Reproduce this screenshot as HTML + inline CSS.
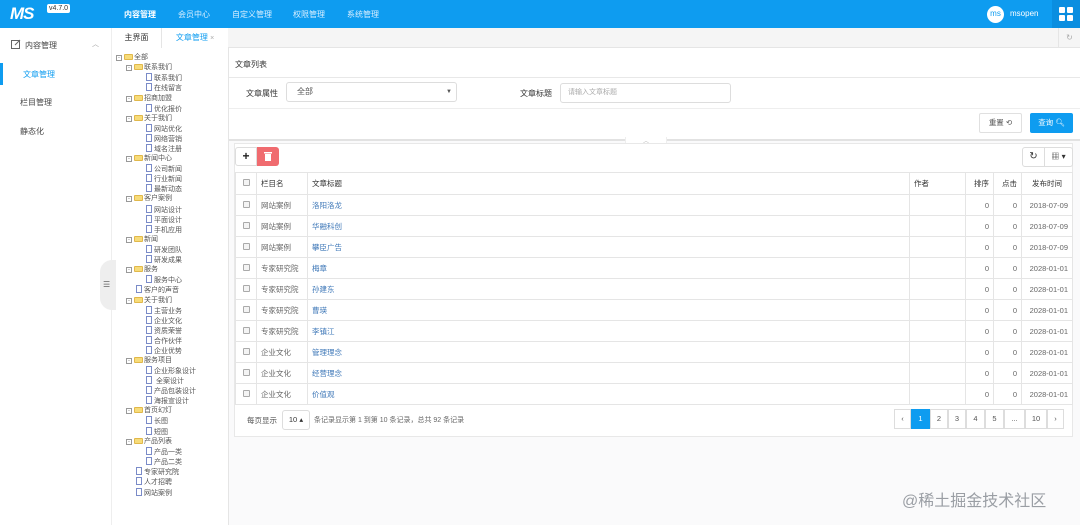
<!DOCTYPE html>
<html><head><meta charset="utf-8"><style>
*{box-sizing:border-box;margin:0;padding:0}
body{width:1080px;height:525px;overflow:hidden;background:#fff;font-family:"Liberation Sans","Noto Sans CJK SC",sans-serif;font-size:8px;color:#333;position:relative}
.a{position:absolute}
.hdr{left:0;top:0;width:1080px;height:28px;background:#0e9cf0}
.nav{top:9px;color:#d9efff;font-size:8px}
.tree div{position:absolute;height:10px;line-height:10px;font-size:7px;color:#555;white-space:nowrap}
.fd{display:inline-block;width:9px;height:6px;background:#f7dc7a;border:1px solid #e1b84a;border-radius:1px;vertical-align:-1px;margin-right:1px}
.fl{display:inline-block;width:6px;height:8px;border:1px solid #7a8bc8;background:#fff;vertical-align:-1px;margin-right:2px}
.mn{display:inline-block;width:6px;height:6px;border:1px solid #999;vertical-align:0;margin-right:2px;font-size:5px;line-height:4px;text-align:center}
table{border-collapse:collapse;position:absolute;left:235px;top:172px;width:838px;font-size:7.5px}
td{border:1px solid #e5e5e5;height:21px;padding:0 4px;color:#666}
thead td{height:22px;color:#333}
td.n{text-align:right}
td.l{color:#3f78b8}
.cb{display:inline-block;width:7px;height:7px;border:1px solid #aaa;border-radius:1px;background:#f4f4f4}
.pg{top:409px;height:20px;border:1px solid #ddd;background:#fff;text-align:center;line-height:18px;font-size:7.5px;color:#555}
</style></head><body>
<div class="a hdr"></div>
<div class="a" style="left:10px;top:4px;color:#fff;font-size:17px;font-style:italic;font-weight:bold;letter-spacing:-1px">MS</div>
<div class="a" style="left:47px;top:4px;background:#fff;color:#333;font-size:7px;padding:0 2px;border-radius:2px;line-height:9px">v4.7.0</div>
<div class="a nav" style="left:124px;color:#fff;font-weight:bold">内容管理</div>
<div class="a nav" style="left:178px">会员中心</div>
<div class="a nav" style="left:232px">自定义管理</div>
<div class="a nav" style="left:293px">权限管理</div>
<div class="a nav" style="left:347px">系统管理</div>
<div class="a" style="left:987px;top:6px;width:17px;height:17px;border-radius:50%;background:#fff;color:#0e9cf0;font-size:8px;text-align:center;line-height:16px">ms</div>
<div class="a" style="left:1010px;top:9px;color:#fff;font-size:8px">msopen</div>
<div class="a" style="left:1052px;top:0;width:28px;height:28px;background:#0a8ee0"></div>
<svg class="a" style="left:1059px;top:7px" width="14" height="14"><rect x="0" y="0" width="6" height="6" rx="1" fill="#fff"/><rect x="8" y="0" width="6" height="6" rx="1" fill="#fff"/><rect x="0" y="8" width="6" height="6" rx="1" fill="#fff"/><rect x="8" y="8" width="6" height="6" rx="1" fill="#fff"/></svg>

<!-- left sidebar -->
<div class="a" style="left:0;top:28px;width:112px;height:497px;background:#fff;border-right:1px solid #eee"></div>
<svg class="a" style="left:11px;top:39px" width="10" height="10"><rect x="0.5" y="1.5" width="8" height="8" fill="none" stroke="#666"/><path d="M4 6 L9 1" stroke="#666"/></svg>
<div class="a" style="left:25px;top:40px;font-size:8px;color:#444">内容管理</div>
<div class="a" style="left:92px;top:39px;font-size:7px;color:#999">︿</div>
<div class="a" style="left:0;top:63px;width:3px;height:22px;background:#0e9cf0"></div>
<div class="a" style="left:23px;top:69px;font-size:8px;color:#0e9cf0">文章管理</div>
<div class="a" style="left:20px;top:97px;font-size:8px;color:#444">栏目管理</div>
<div class="a" style="left:20px;top:126px;font-size:8px;color:#444">静态化</div>
<div class="a" style="left:100px;top:260px;width:16px;height:50px;background:#eee;border-radius:12px 0 0 12px"></div>
<div class="a" style="left:103px;top:280px;font-size:8px;color:#666">☰</div>

<!-- tabs -->
<div class="a" style="left:112px;top:28px;width:968px;height:20px;background:#f5f5f5;border-bottom:1px solid #e5e5e5"></div>
<div class="a" style="left:112px;top:28px;width:50px;height:20px;background:#fff;border-right:1px solid #e5e5e5;text-align:center;line-height:20px;font-size:8px;color:#333">主界面</div>
<div class="a" style="left:162px;top:28px;width:66px;height:21px;background:#fff;text-align:center;line-height:20px;font-size:8px;color:#0e9cf0">文章管理 <span style="color:#aaa;font-size:7px">×</span></div>
<div class="a" style="left:1058px;top:28px;width:22px;height:20px;border-left:1px solid #e5e5e5;text-align:center;line-height:20px;color:#aaa;font-size:8px">↻</div>

<!-- tree -->
<div class="a" style="left:228px;top:48px;width:1px;height:477px;background:#e5e5e5"></div>
<div class="a tree" style="left:116px;top:53px">
<div style="top:0;left:0"><span class="mn">-</span><span class="fd"></span>全部</div>
<div style="top:10px;left:10px"><span class="mn">-</span><span class="fd"></span>联系我们</div>
<div style="top:20px;left:30px"><span class="fl"></span>联系我们</div>
<div style="top:30px;left:30px"><span class="fl"></span>在线留言</div>
<div style="top:41px;left:10px"><span class="mn">-</span><span class="fd"></span>招商加盟</div>
<div style="top:51px;left:30px"><span class="fl"></span>优化报价</div>
<div style="top:61px;left:10px"><span class="mn">-</span><span class="fd"></span>关于我们</div>
<div style="top:71px;left:30px"><span class="fl"></span>网站优化</div>
<div style="top:81px;left:30px"><span class="fl"></span>网络营销</div>
<div style="top:91px;left:30px"><span class="fl"></span>域名注册</div>
<div style="top:101px;left:10px"><span class="mn">-</span><span class="fd"></span>新闻中心</div>
<div style="top:111px;left:30px"><span class="fl"></span>公司新闻</div>
<div style="top:121px;left:30px"><span class="fl"></span>行业新闻</div>
<div style="top:131px;left:30px"><span class="fl"></span>最新动态</div>
<div style="top:141px;left:10px"><span class="mn">-</span><span class="fd"></span>客户案例</div>
<div style="top:152px;left:30px"><span class="fl"></span>网站设计</div>
<div style="top:162px;left:30px"><span class="fl"></span>平面设计</div>
<div style="top:172px;left:30px"><span class="fl"></span>手机应用</div>
<div style="top:182px;left:10px"><span class="mn">-</span><span class="fd"></span>新闻</div>
<div style="top:192px;left:30px"><span class="fl"></span>研发团队</div>
<div style="top:202px;left:30px"><span class="fl"></span>研发成果</div>
<div style="top:212px;left:10px"><span class="mn">-</span><span class="fd"></span>服务</div>
<div style="top:222px;left:30px"><span class="fl"></span>服务中心</div>
<div style="top:232px;left:20px"><span class="fl"></span>客户的声音</div>
<div style="top:243px;left:10px"><span class="mn">-</span><span class="fd"></span>关于我们</div>
<div style="top:253px;left:30px"><span class="fl"></span>主营业务</div>
<div style="top:263px;left:30px"><span class="fl"></span>企业文化</div>
<div style="top:273px;left:30px"><span class="fl"></span>资质荣誉</div>
<div style="top:283px;left:30px"><span class="fl"></span>合作伙伴</div>
<div style="top:293px;left:30px"><span class="fl"></span>企业优势</div>
<div style="top:303px;left:10px"><span class="mn">-</span><span class="fd"></span>服务项目</div>
<div style="top:313px;left:30px"><span class="fl"></span>企业形象设计</div>
<div style="top:323px;left:30px"><span class="fl"></span> 全案设计</div>
<div style="top:333px;left:30px"><span class="fl"></span>产品包装设计</div>
<div style="top:343px;left:30px"><span class="fl"></span>海报宣设计</div>
<div style="top:353px;left:10px"><span class="mn">-</span><span class="fd"></span>首页幻灯</div>
<div style="top:363px;left:30px"><span class="fl"></span>长图</div>
<div style="top:374px;left:30px"><span class="fl"></span>短图</div>
<div style="top:384px;left:10px"><span class="mn">-</span><span class="fd"></span>产品列表</div>
<div style="top:394px;left:30px"><span class="fl"></span>产品一类</div>
<div style="top:404px;left:30px"><span class="fl"></span>产品二类</div>
<div style="top:414px;left:20px"><span class="fl"></span>专家研究院</div>
<div style="top:424px;left:20px"><span class="fl"></span>人才招聘</div>
<div style="top:435px;left:20px"><span class="fl"></span>网站案例</div>
</div>

<!-- main -->
<div class="a" style="left:235px;top:59px;font-size:8px;color:#333">文章列表</div>
<div class="a" style="left:229px;top:77px;width:851px;height:1px;background:#e8e8e8"></div>
<div class="a" style="left:246px;top:88px;font-size:8px;color:#333">文章属性</div>
<div class="a" style="left:286px;top:82px;width:171px;height:20px;border:1px solid #ddd;border-radius:3px;padding-left:10px;line-height:18px;font-size:8px;color:#555">全部<span style="position:absolute;right:4px;font-size:6px">▼</span></div>
<div class="a" style="left:520px;top:88px;font-size:8px;color:#333">文章标题</div>
<div class="a" style="left:560px;top:83px;width:171px;height:20px;border:1px solid #ddd;border-radius:3px;padding-left:7px;line-height:18px;font-size:7px;color:#aaa">请输入文章标题</div>
<div class="a" style="left:229px;top:108px;width:851px;height:1px;background:#eee"></div>
<div class="a" style="left:979px;top:113px;width:43px;height:20px;border:1px solid #e0e0e0;border-radius:2px;text-align:center;line-height:18px;font-size:7.5px;color:#555">重置 ⟲</div>
<div class="a" style="left:1030px;top:113px;width:43px;height:20px;background:#0e9cf0;border-radius:2px;text-align:center;line-height:20px;font-size:7.5px;color:#fff">查询 &#x1F50D;&#xFE0E;</div>
<div class="a" style="left:229px;top:139px;width:851px;height:386px;background:#fafafb;border-top:2px solid #e2e2e2"></div>
<div class="a" style="left:625px;top:137px;width:42px;height:11px;background:#fff;border:1px solid #eee;border-top:none;text-align:center;font-size:6px;color:#bbb;line-height:10px">︿</div>
<div class="a" style="left:234px;top:143px;width:839px;height:294px;background:#fff;border:1px solid #e8e8e8"></div>
<div class="a" style="left:235px;top:147px;width:22px;height:19px;border:1px solid #ddd;border-radius:3px 0 0 3px;text-align:center;line-height:17px;font-size:12px;font-weight:bold;color:#222">+</div>
<div class="a" style="left:257px;top:147px;width:22px;height:19px;background:#f06b6f;border-radius:0 3px 3px 0"></div>
<svg class="a" style="left:264px;top:151px" width="8" height="10"><rect x="0" y="1" width="8" height="1.5" fill="#fff"/><rect x="1" y="3" width="6" height="7" fill="#fff"/></svg>
<div class="a" style="left:1022px;top:147px;width:23px;height:20px;border:1px solid #ddd;border-radius:3px 0 0 3px;text-align:center;line-height:18px;font-size:10px;color:#333">↻</div>
<div class="a" style="left:1045px;top:147px;width:28px;height:20px;border:1px solid #ddd;border-left:none;border-radius:0 3px 3px 0;text-align:center;line-height:18px;font-size:8px;color:#333">▦ ▾</div>
<table>
<thead><tr><td style="width:21px;text-align:center"><span class="cb"></span></td><td style="width:51px">栏目名</td><td>文章标题</td><td style="width:56px">作者</td><td style="width:28px" class="n">排序</td><td style="width:28px" class="n">点击</td><td style="width:51px;text-align:center">发布时间</td></tr></thead>
<tbody>
<tr><td style="text-align:center"><span class="cb"></span></td><td>网站案例</td><td class="l">洛阳洛龙</td><td></td><td class="n">0</td><td class="n">0</td><td class="n">2018-07-09</td></tr>
<tr><td style="text-align:center"><span class="cb"></span></td><td>网站案例</td><td class="l">华融科创</td><td></td><td class="n">0</td><td class="n">0</td><td class="n">2018-07-09</td></tr>
<tr><td style="text-align:center"><span class="cb"></span></td><td>网站案例</td><td class="l">攀臣广告</td><td></td><td class="n">0</td><td class="n">0</td><td class="n">2018-07-09</td></tr>
<tr><td style="text-align:center"><span class="cb"></span></td><td>专家研究院</td><td class="l">梅章</td><td></td><td class="n">0</td><td class="n">0</td><td class="n">2028-01-01</td></tr>
<tr><td style="text-align:center"><span class="cb"></span></td><td>专家研究院</td><td class="l">孙建东</td><td></td><td class="n">0</td><td class="n">0</td><td class="n">2028-01-01</td></tr>
<tr><td style="text-align:center"><span class="cb"></span></td><td>专家研究院</td><td class="l">曹瑛</td><td></td><td class="n">0</td><td class="n">0</td><td class="n">2028-01-01</td></tr>
<tr><td style="text-align:center"><span class="cb"></span></td><td>专家研究院</td><td class="l">李镇江</td><td></td><td class="n">0</td><td class="n">0</td><td class="n">2028-01-01</td></tr>
<tr><td style="text-align:center"><span class="cb"></span></td><td>企业文化</td><td class="l">管理理念</td><td></td><td class="n">0</td><td class="n">0</td><td class="n">2028-01-01</td></tr>
<tr><td style="text-align:center"><span class="cb"></span></td><td>企业文化</td><td class="l">经营理念</td><td></td><td class="n">0</td><td class="n">0</td><td class="n">2028-01-01</td></tr>
<tr><td style="text-align:center"><span class="cb"></span></td><td>企业文化</td><td class="l">价值观</td><td></td><td class="n">0</td><td class="n">0</td><td class="n">2028-01-01</td></tr>
</tbody></table>
<div class="a" style="left:247px;top:415px;font-size:7.5px;color:#555">每页显示</div>
<div class="a" style="left:282px;top:410px;width:28px;height:20px;border:1px solid #ddd;border-radius:3px;text-align:center;line-height:18px;font-size:7.5px;color:#333">10 ▴</div>
<div class="a" style="left:314px;top:415px;font-size:7px;color:#666">条记录显示第 1 到第 10 条记录，总共 92 条记录</div>
<div class="a pg" style="left:894px;width:17px">‹</div>
<div class="a pg" style="left:911px;width:19px;background:#0e9cf0;border-color:#0e9cf0;color:#fff">1</div>
<div class="a pg" style="left:930px;width:18px">2</div>
<div class="a pg" style="left:948px;width:18px">3</div>
<div class="a pg" style="left:966px;width:19px">4</div>
<div class="a pg" style="left:985px;width:19px">5</div>
<div class="a pg" style="left:1004px;width:21px">...</div>
<div class="a pg" style="left:1025px;width:22px">10</div>
<div class="a pg" style="left:1047px;width:17px">›</div>
<div class="a" style="left:902px;top:487px;font-size:16px;color:#9a9ea4">@稀土掘金技术社区</div>
</body></html>
